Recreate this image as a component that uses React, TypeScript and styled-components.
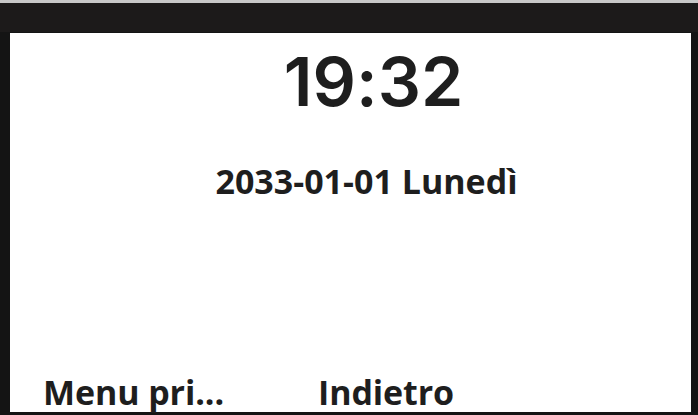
import styled, { createGlobalStyle } from "styled-components";

const GlobalStyle = createGlobalStyle`
  html, body {
    margin: 0;
    padding: 0;
    background: #141414;
  }
`;

const Device = styled.div`
  width: 698px;
  height: 415px;
  display: flex;
  flex-direction: column;
  background: #141414;
  border-top: 3px solid #c8c8c8;
  box-sizing: border-box;
`;

const StatusBar = styled.div`
  height: 29px;
  background: #1c1a1a;
  flex-shrink: 0;
  margin-bottom: 1px;
`;

const Display = styled.div`
  flex: 1;
  margin: 0 7px 3px 10px;
  background: #fff;
  display: flex;
  flex-direction: column;
  font-family: "Open Sans", "Noto Sans", sans-serif;
  color: #1e1e1e;
`;

const Clock = styled.div`
  font-family: Inter, "Open Sans", sans-serif;
  font-size: 68px;
  font-weight: 600;
  font-feature-settings: "calt" 0;
  line-height: 1;
  text-align: center;
  padding-left: 46px;
  margin-top: 14px;
`;

const DateLine = styled.div`
  font-size: 34px;
  font-weight: 700;
  text-align: center;
  padding-left: 32px;
  margin-top: 49px;
  line-height: 1;
`;

const SoftKeys = styled.div`
  margin-top: auto;
  display: flex;
  padding: 0 0 0 33px;
`;

const SoftKey = styled.div<{ $width: number }>`
  width: ${(p) => p.$width}px;
  font-size: 34px;
  font-weight: 700;
  line-height: 1.15;
  letter-spacing: -0.1px;
`;

export default function App() {
  return (
    <>
      <GlobalStyle />
      <Device>
        <StatusBar />
        <Display>
          <Clock>19:32</Clock>
          <DateLine>2033-01-01 Lunedì</DateLine>
          <SoftKeys>
            <SoftKey $width={275}>Menu pri...</SoftKey>
            <SoftKey $width={200}>Indietro</SoftKey>
          </SoftKeys>
        </Display>
      </Device>
    </>
  );
}
